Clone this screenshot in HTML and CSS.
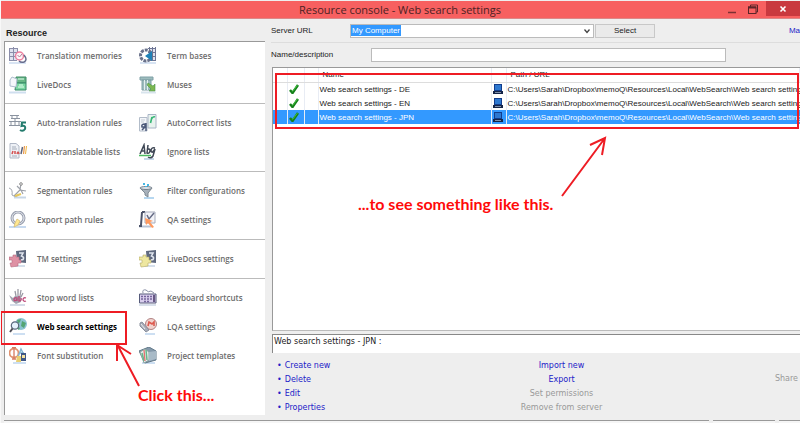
FILE: index.html
```html
<!DOCTYPE html>
<html lang="en">
<head>
<meta charset="utf-8">
<title>Resource console - Web search settings</title>
<link rel="stylesheet" href="styles.css">
</head>
<body>
<div class="window">
  <header class="titlebar">
    <h1>Resource console - Web search settings</h1>
    <div class="controls">
      <button class="control" aria-label="Minimize"><svg viewBox="0 0 10 10"><path d="M1 8.500H9" stroke="#7b3033" stroke-width="1.500"/></svg></button>
      <button class="control" aria-label="Restore"><svg viewBox="0 0 10 10"><path d="M2.500 3V1H9.500V8H8" fill="none" stroke="#5a2528"/><rect x=".5" y="3" width="7.500" height="6.500" fill="#f86161" stroke="#5a2528"/><path d="M0 3.500H8" stroke="#5a2528" stroke-width="2"/></svg></button>
      <button class="control close" aria-label="Close"><svg viewBox="0 0 10 10"><path d="M2.500 2.500L7.500 7.500M7.500 2.500L2.500 7.500" stroke="#fff" stroke-width="1.600"/></svg></button>
    </div>
  </header>
  <div class="body">
    <aside class="sidebar">
      <h2>Resource</h2>
      <nav class="resources">
        <div class="group">
          <a href="#"><svg viewBox="0 0 18 18"><path d="M0 16H17" stroke="#d8e4f3" stroke-width="2"/><path d="M1 1H8V13H1Z" fill="#dfe2ee"/><path d="M.5 1V14M4.500 0V14M8.500 1V8M0 1.500H9M0 5.500H9M0 9.500H7M0 13.500H8" stroke="#8b8eaa"/><circle cx="10.500" cy="9" r="4" fill="#fff3f7" stroke="#ed7f9e" stroke-width="1.500"/><path d="M8.500 8L10.500 10L13 7" fill="none" stroke="#a9849b"/><path d="M15 8Q19 13 15 15Q12 16 10 14" fill="none" stroke="#666b8c" stroke-width="1.500"/></svg>Translation memories</a>
          <a href="#"><svg viewBox="0 0 18 18"><path d="M1 16H17" stroke="#d8e4f3" stroke-width="2"/><path d="M10 1H17V14H10Z" fill="#dfe2ee"/><path d="M10.500 0V14M13.500 0V14M16.500 0V14M9 1.500H17M9 5.500H17M9 9.500H17M9 13.500H17" stroke="#6d7594"/><circle cx="7" cy="8.500" r="5.500" fill="none" stroke="#69718b" stroke-width="3" stroke-dasharray="3 1"/><path d="M6 9L13 4V14Z" fill="#1f82b8"/></svg>Term bases</a>
          <a href="#"><svg viewBox="0 0 18 18"><path d="M0 16.500H17" stroke="#d0dfef" stroke-width="2"/><path d="M7 1H17V7H7Z" fill="#66b685" stroke="#3d8964"/><path d="M7 7H17V14H6Z" fill="#7bd6a2" stroke="#368969"/><path d="M9 3H15M10 9H14M9 11H15" stroke="#e6fff0"/><path d="M1 4L3 1L8 3L7 11L1 10Z" fill="#f5f7fb" stroke="#aebdce"/></svg>LiveDocs</a>
          <a href="#"><svg viewBox="0 0 18 18"><path d="M2 16.500H17" stroke="#d8e4ed" stroke-width="2"/><path d="M1 1H14V4H1ZM3 4H12V14H3Z" fill="#9dbcbd" stroke="#7fa0a6"/><path d="M5.500 4V14M8.500 4V14" stroke="#e3efef"/><path d="M9 7L14 10L16 8V15H10L12 13L8 9Z" fill="#7db751" stroke="#4c964e" stroke-width=".6"/></svg>Muses</a>
        </div>
        <div class="group">
          <a href="#"><svg viewBox="0 0 18 18"><path d="M1 1.500H10M2 4.500H11M0 7.500H12M0 11.500H11M3 1V5M8 1V5M2 7V11M6 4V11M10 7V11" stroke="#8b93a0"/><path d="M17 8.500H13L12.500 12Q17 11 16 15Q14 18 11 16" fill="none" stroke="#237b6d" stroke-width="2"/></svg>Auto-translation rules</a>
          <a href="#"><svg viewBox="0 0 18 18"><path d="M9 .5H17V14H9Z" fill="#e8f3ee" stroke="#a9b4c6"/><path d="M11.500 9L13 3M12.500 5Q14 2 16 3" fill="none" stroke="#35b574" stroke-width="1.600"/><path d="M.5 3.500H8V17H.5Z" fill="#f4f6fa" stroke="#b2bcc9"/><path d="M2 6H6M2 8H5" stroke="#c3cbd5"/><path d="M3 16L6 13V10Q2 10 3 13H7M7 9V17" fill="none" stroke="#4b5879" stroke-width="1.500"/></svg>AutoCorrect lists</a>
          <a href="#"><svg viewBox="0 0 18 18"><path d="M1 .5H7L10 3V15H1Z" fill="#eef1f6" stroke="#b0b8c6"/><path d="M3 4H7M3 6H8M3 13H8" stroke="#a5adba"/><path d="M3 11L4 8M6 11V8M8 11Q9 7 10 11" fill="none" stroke="#d45151" stroke-width="1.500"/><path d="M12 11L13.500 4" stroke="#59627c" stroke-width="1.500"/><path d="M14.500 11L15.500 3" stroke="#e79a53" stroke-width="1.300"/><path d="M16.500 11L17.500 3" stroke="#f0b33d"/></svg>Non-translatable lists</a>
          <a href="#"><svg viewBox="0 0 18 18"><path d="M5 16H15" stroke="#c5d7e9" stroke-width="2"/><path d="M1 11L5 2L6 11M2 8H6M9 2L8 10Q11 11 11 7Q10 5 8 7M16 5Q12 4 12 8Q13 11 16 6L14 13Q12 16 9 14" fill="none" stroke="#3f4856" stroke-width="1.500"/><path d="M0 12.500H12" stroke="#4dba62" stroke-width="1.500"/></svg>Ignore lists</a>
        </div>
        <div class="group">
          <a href="#"><svg viewBox="0 0 18 18"><path d="M5 15.500H17" stroke="#c7d6e6" stroke-width="2"/><path d="M12 1L11 8L5 14M11 8L17 9M8 4L12 8L14 12" fill="none" stroke="#9da1a9" stroke-width="1.200"/><circle cx="12" cy="2" r="1.300" fill="#fff" stroke="#888"/><path d="M0 6Q4 7 3 13Q7 16 11 12" fill="none" stroke="#a0a5ae"/><path d="M6 14L12 12" stroke="#e7c85c" stroke-width="2"/></svg>Segmentation rules</a>
          <a href="#"><svg viewBox="0 0 18 18"><path d="M5 16H15" stroke="#b6d7f0" stroke-width="2"/><path d="M1 6H13L9 11V15L6 13V11Z" fill="#a7b1bb" stroke="#7d8993"/><ellipse cx="7" cy="6" rx="6" ry="1.500" fill="#dbe2e9" stroke="#76818b"/><path d="M5 1V3M9 2V4M7 4V5" stroke="#45b7e4" stroke-width="2"/></svg>Filter configurations</a>
          <a href="#"><svg viewBox="0 0 18 18"><path d="M0 16H17" stroke="#c6d9ef" stroke-width="2"/><circle cx="9" cy="7" r="6" fill="none" stroke="#9aa0af" stroke-width="3"/><circle cx="9" cy="7" r="6" fill="none" stroke="#e6e9f0"/><path d="M6 12L8 8L11 10L9 14L5 16Z" fill="#ffe891" stroke="#d3b96d" stroke-width=".7"/></svg>Export path rules</a>
          <a href="#"><svg viewBox="0 0 18 18"><path d="M0 15.500H12" stroke="#b7c3d6" stroke-width="2"/><path d="M3 1L2 14M0 15H3M3 1H6" stroke="#4c5369" stroke-width="2"/><path d="M6 1H16V12H6Z" fill="#f2f3f8" stroke="#a6abbb"/><path d="M8 4L10 8L15 2" fill="none" stroke="#656b85" stroke-width="1.500"/><path d="M6 7L14 10L11 11L15 16L13 17L9 12L7 14Z" fill="#ff995e"/></svg>QA settings</a>
        </div>
        <div class="group">
          <a href="#"><svg viewBox="0 0 18 18"><path d="M6 16H16" stroke="#d5dfeb" stroke-width="2"/><path d="M7 1L17 0V13L8 12Z" fill="#5f697f"/><path d="M10 3H14L12.500 6Q15.500 7 14 9.500L12 10" fill="none" stroke="#e1e6ef" stroke-width="1.600"/><path d="M0 7H4V5H7V7H10V10H12V13H9V16L2 17L1 13H3V10H0Z" fill="#df91a4" stroke="#b66d81" stroke-width=".6"/></svg>TM settings</a>
          <a href="#"><svg viewBox="0 0 18 18"><path d="M6 16H16" stroke="#d5dfeb" stroke-width="2"/><path d="M7 1L17 0V13L8 12Z" fill="#5f697f"/><path d="M10 3H14L12.500 6Q15.500 7 14 9.500L12 10" fill="none" stroke="#e1e6ef" stroke-width="1.600"/><path d="M0 7H4V5H7V7H10V10H12V13H9V16L2 17L1 13H3V10H0Z" fill="#eee7a0" stroke="#b4a967" stroke-width=".6"/></svg>LiveDocs settings</a>
        </div>
        <div class="group">
          <a href="#"><svg viewBox="0 0 18 18"><path d="M1 16H16" stroke="#d4dce8" stroke-width="2"/><path d="M6 2L7 7M9 0V7M12 1L11 7M14 4L12 8" stroke="#9b9ba5" stroke-width="1.300"/><path d="M0 6L4 9L6 7H12V13L7 15L3 12Z" fill="#a2a5b1"/><path d="M8 9Q5 8 5 11Q6 13 8 10V12M10 7V12Q13 12 12 9M17 9Q14 8 14 11Q15 13 17 12" fill="none" stroke="#bd4879" stroke-width="1.300"/></svg>Stop word lists</a>
          <a href="#"><svg viewBox="0 0 18 18"><path d="M0 16H17" stroke="#d8dfea" stroke-width="2"/><path d="M4 4Q3 0 7 1Q9 4 12 2L15 4" fill="none" stroke="#8b91a7"/><path d="M.5 5H17V14H.5Z" fill="#d8cdec" stroke="#565b7b"/><path d="M2 7.500H13M2 10H13M5 12.500H11" stroke="#75659b" stroke-dasharray="2 1" stroke-width="1.300"/><path d="M15 6V13" stroke="#675784" stroke-width="2"/></svg>Keyboard shortcuts</a>
          <a href="#" class="active"><svg viewBox="0 0 18 18"><path d="M4 16H16" stroke="#cddff2" stroke-width="2"/><circle cx="12" cy="6" r="6" fill="#8cc3d2"/><path d="M8 2L12 1L11 4L9 6ZM13 3L17 5L15 10L12 8ZM8 8L11 10L10 12L7 10Z" fill="#54a573"/><circle cx="6" cy="7.500" r="3.700" fill="#e4f1fb" stroke="#57667b" stroke-width="1.200"/><path d="M3.500 10.500L1 14" stroke="#4d4d55" stroke-width="2"/></svg>Web search settings</a>
          <a href="#"><svg viewBox="0 0 18 18"><path d="M6 16H16" stroke="#cddff2" stroke-width="2"/><circle cx="12" cy="6" r="5.500" fill="#f1d3ce" stroke="#b18283"/><path d="M9 8L10 4L13 6L15 4V8" fill="none" stroke="#dd5a4f" stroke-width="1.600"/><path d="M1 5L3 4L10 12L7 14L1 8Z" fill="#a7acb8" stroke="#8a909d"/><path d="M2 6L6 11" stroke="#eee"/></svg>LQA settings</a>
          <a href="#"><svg viewBox="0 0 18 18"><path d="M4 16H17" stroke="#cddff2" stroke-width="2"/><circle cx="5" cy="6" r="4.500" fill="none" stroke="#e19370" stroke-width="1.800"/><path d="M5 0V12M3 .5H7M3 12H7" stroke="#d77a60" stroke-width="1.300"/><path d="M9 10L12 2L15 8M10 6H15" fill="none" stroke="#82b5d3" stroke-width="1.500"/><path d="M8 9H12V15H7Z" fill="#e7ce72"/><path d="M12 6H17V14H12Z" fill="#3f5786"/><path d="M13 8H16V11H13Z" fill="#f4e2a1"/></svg>Font substitution</a>
          <a href="#"><svg viewBox="0 0 18 18"><path d="M3 16H16" stroke="#cddff2" stroke-width="2"/><path d="M0 4L10 0L17 4V13L6 16Z" fill="#8499aa" stroke="#617889"/><path d="M1 5L6 2L10 5V13L5 16Z" fill="#e3efec" stroke="#8ca39f"/><path d="M3 6L5 14M7 3L8 13" stroke="#67b689" stroke-width="1.500"/><path d="M5 3L6 14" stroke="#e46f70" stroke-width="1.300"/><path d="M10 5L17 4V12L10 14Z" fill="#a8bac7"/></svg>Project templates</a>
        </div>
      </nav>
    </aside>
    <main class="main">
      <form class="row server">
        <label for="server">Server URL</label>
        <div class="combo"><input id="server" value="My Computer"><svg viewBox="0 0 8 8"><path d="M1.500 2.500L4 5.500L6.500 2.500" fill="none" stroke="#444" stroke-width="1.300"/></svg></div>
        <button type="button" class="select">Select</button>
        <a href="#" class="manage">Ma</a>
      </form>
      <form class="row filter">
        <label for="name">Name/description</label>
        <input id="name">
      </form>
      <div class="list">
        <table>
          <colgroup><col class="c-gap"><col class="c-check"><col class="c-gap"><col class="c-name"><col class="c-pc"><col></colgroup>
          <thead><tr><th></th><th></th><th></th><th>Name</th><th></th><th>Path / URL</th></tr></thead>
          <tbody>
            <tr><td></td><td><svg viewBox="0 0 10 10"><path d="M1 6L3.500 9L9 1" fill="none" stroke="#15801a" stroke-width="2.500"/><path d="M3.500 7.500L8.500 1" stroke="#43c33f"/></svg></td><td></td><td>Web search settings - DE</td><td><svg viewBox="0 0 10 10"><path d="M1 0H9V7H1Z" fill="#123c8c"/><path d="M2 1H8V6H2Z" fill="#2d78d0"/><path d="M0 7H10V10H0Z" fill="#142447"/><path d="M2 8.500H8" stroke="#7c8eac"/></svg></td><td>C:\Users\Sarah\Dropbox\memoQ\Resources\Local\WebSearch\Web search settings</td></tr>
            <tr><td></td><td><svg viewBox="0 0 10 10"><path d="M1 6L3.500 9L9 1" fill="none" stroke="#15801a" stroke-width="2.500"/><path d="M3.500 7.500L8.500 1" stroke="#43c33f"/></svg></td><td></td><td>Web search settings - EN</td><td><svg viewBox="0 0 10 10"><path d="M1 0H9V7H1Z" fill="#123c8c"/><path d="M2 1H8V6H2Z" fill="#2d78d0"/><path d="M0 7H10V10H0Z" fill="#142447"/><path d="M2 8.500H8" stroke="#7c8eac"/></svg></td><td>C:\Users\Sarah\Dropbox\memoQ\Resources\Local\WebSearch\Web search settings</td></tr>
            <tr class="selected"><td></td><td><svg viewBox="0 0 10 10"><path d="M1 6L3.500 9L9 1" fill="none" stroke="#15801a" stroke-width="2.500"/><path d="M3.500 7.500L8.500 1" stroke="#43c33f"/></svg></td><td></td><td>Web search settings - JPN</td><td><svg viewBox="0 0 10 10"><path d="M1 0H9V7H1Z" fill="#123c8c"/><path d="M2 1H8V6H2Z" fill="#2d78d0"/><path d="M0 7H10V10H0Z" fill="#142447"/><path d="M2 8.500H8" stroke="#7c8eac"/></svg></td><td>C:\Users\Sarah\Dropbox\memoQ\Resources\Local\WebSearch\Web search settings</td></tr>
          </tbody>
        </table>
      </div>
      <div class="summary">Web search settings - JPN :</div>
      <div class="actions">
        <ul>
          <li><a href="#">Create new</a></li>
          <li><a href="#">Delete</a></li>
          <li><a href="#">Edit</a></li>
          <li><a href="#">Properties</a></li>
        </ul>
        <div class="middle">
          <a href="#">Import new</a>
          <a href="#">Export</a>
          <a class="disabled">Set permissions</a>
          <a class="disabled">Remove from server</a>
        </div>
        <div class="last"><a class="disabled">Share</a></div>
      </div>
    </main>
  </div>
  <footer class="status"><span></span><span></span><span></span></footer>
  <svg class="marks" width="800" height="423" viewBox="0 0 800 423" fill="none" stroke="#ee1c24" stroke-width="2">
    <rect x="0" y="312" width="125" height="32"/>
    <rect x="275" y="74" width="522" height="54"/>
    <path d="M138 386L117 346M116 361V345L130 354"/>
    <path d="M561 196L604 138M589 145L604 138L601 155"/>
  </svg>
  <p class="note note-click">Click this...</p>
  <p class="note note-see">...to see something like this.</p>
</div>
</body>
</html>
```
FILE: styles.css
```css
* { box-sizing: border-box; }
body { margin: 0; background: #fff; font: 8px/14px "Liberation Sans", Arial, sans-serif; color: #222; }
a { color: #2222c8; text-decoration: none; }
button, input { font: inherit; color: inherit; border-radius: 0; }
.window { position: relative; display: flex; flex-direction: column; height: 100vh; overflow: hidden; background: #eee; border-left: 1px solid #f8f8f8; }

.titlebar { display: flex; align-items: center; height: 18px; flex: none; margin-top: 1px; background: #f76060; border-bottom: 1px solid #dc8888; }
.titlebar h1 { flex: 1; margin: 0; padding-left: 78px; text-align: center; font: 11px/16px "Open Sans", sans-serif; color: #4c2224; }
.controls { display: flex; align-self: flex-start; }
.control { display: grid; place-items: center; width: 21px; height: 15px; padding: 0; border: 0; background: none; }
.control svg { width: 10px; height: 10px; }
.control.close { width: 34px; margin-left: 3px; background: #c9393f; }

.body { display: flex; flex: 1; min-height: 0; }
.sidebar { display: flex; flex-direction: column; width: 264px; margin-right: 6px; padding: 7px 0 5px 3px; flex: none; }
.sidebar h2 { margin: 0; padding-left: 2px; font-size: 9px; line-height: 15px; }
.resources { flex: 1; background: #fff; border: 1px solid #999; border-width: 1px 0 0 1px; }
.group { display: grid; grid-template-columns: 130px 1fr; gap: 1px 0; padding: 5px 0 5px 4px; border-bottom: 1px solid #bbb; }
.group:first-child { padding-top: 0; padding-bottom: 4px; }
.group:last-child { border-bottom: 0; }
.group a { display: flex; align-items: center; gap: 10px; height: 28px; font: 600 8px/14px "Open Sans", sans-serif; color: #6c6c6c; white-space: nowrap; }
.group svg { width: 18px; height: 18px; flex: none; }
.group a.active { color: #000; font-weight: 700; }

.main { display: flex; flex-direction: column; flex: 1; min-width: 0; }
.row { display: flex; align-items: center; flex: none; }
.server { height: 24px; border-bottom: 1px solid #ddd; }
.server label { width: 79px; }
.combo { display: flex; align-items: center; width: 244px; height: 14px; padding-right: 2px; background: #fff; border: 1px solid #bbb; }
.combo input { width: 50px; height: 11px; padding: 0 0 0 1px; margin-right: auto; border: 0; background: #3399ff; color: #fff; }
.combo svg { width: 8px; height: 8px; }
.select { width: 60px; height: 14px; margin-left: 1px; padding: 0; border: 1px solid #c8c8c8; background: #eaeaea; line-height: 12px; }
.manage { margin-left: auto; }
.filter { height: 24px; }
.filter label { width: 100px; }
.filter input { width: 355px; height: 14px; border: 1px solid #bbb; background: #fff; }

.list { flex: 1; min-height: 0; margin-left: 1px; overflow: hidden; background: #fff; border: 1px solid #999; border-right: 0; border-bottom-color: #bbb; }
table { width: 100%; table-layout: fixed; border-collapse: collapse; }
.c-gap { width: 14px; }
.c-check { width: 17px; }
.c-name { width: 173px; }
.c-pc { width: 15px; }
th, td { height: 14px; padding: 0 0 0 1px; text-align: left; font-weight: normal; line-height: 13px; white-space: nowrap; overflow: hidden; border-right: 1px solid #e8ecf4; }
th { padding-left: 4px; border-bottom: 1px solid #ddd; }
td:last-child { border-right: 0; }
td svg { display: block; width: 10px; height: 10px; }
.selected td { background: #3399ff; color: #fff; }

.summary { flex: none; height: 19px; margin: 3px 0 6px 1px; padding-left: 1px; background: #fff; border-top: 1px solid #888; border-left: 1px solid #888; font: 8px/13px "DejaVu Sans", sans-serif; }
.actions { display: grid; grid-template-columns: 1fr 120px 1fr; flex: none; height: 61px; font: 8px/13px "DejaVu Sans", sans-serif; white-space: nowrap; }
.actions ul { margin: 0; padding: 0 0 0 14px; list-style: none; line-height: 14px; }
.actions li::before { content: "•"; margin-left: -8px; padding-right: 3px; color: #2222c8; }
.actions a { line-height: 14px; }
.middle { display: flex; flex-direction: column; align-items: center; margin: 0 -26px 0 26px; }
.actions .disabled { color: #999; }
.last { padding: 13px 2px 0 0; text-align: right; }

.status { display: grid; grid-template-columns: 1fr 62px 21px; gap: 4px; flex: none; height: 3px; margin-left: 3px; }
.status span { border-top: 1px solid #999; background: #f6f6f6; }

.marks { position: absolute; left: 0; top: 0; }
.note { position: absolute; margin: 0; font: bold 16px/20px Lato, sans-serif; color: #ff0a0a; white-space: nowrap; }
.note-click { left: 137px; top: 385px; }
.note-see { left: 357px; top: 194px; }
```
